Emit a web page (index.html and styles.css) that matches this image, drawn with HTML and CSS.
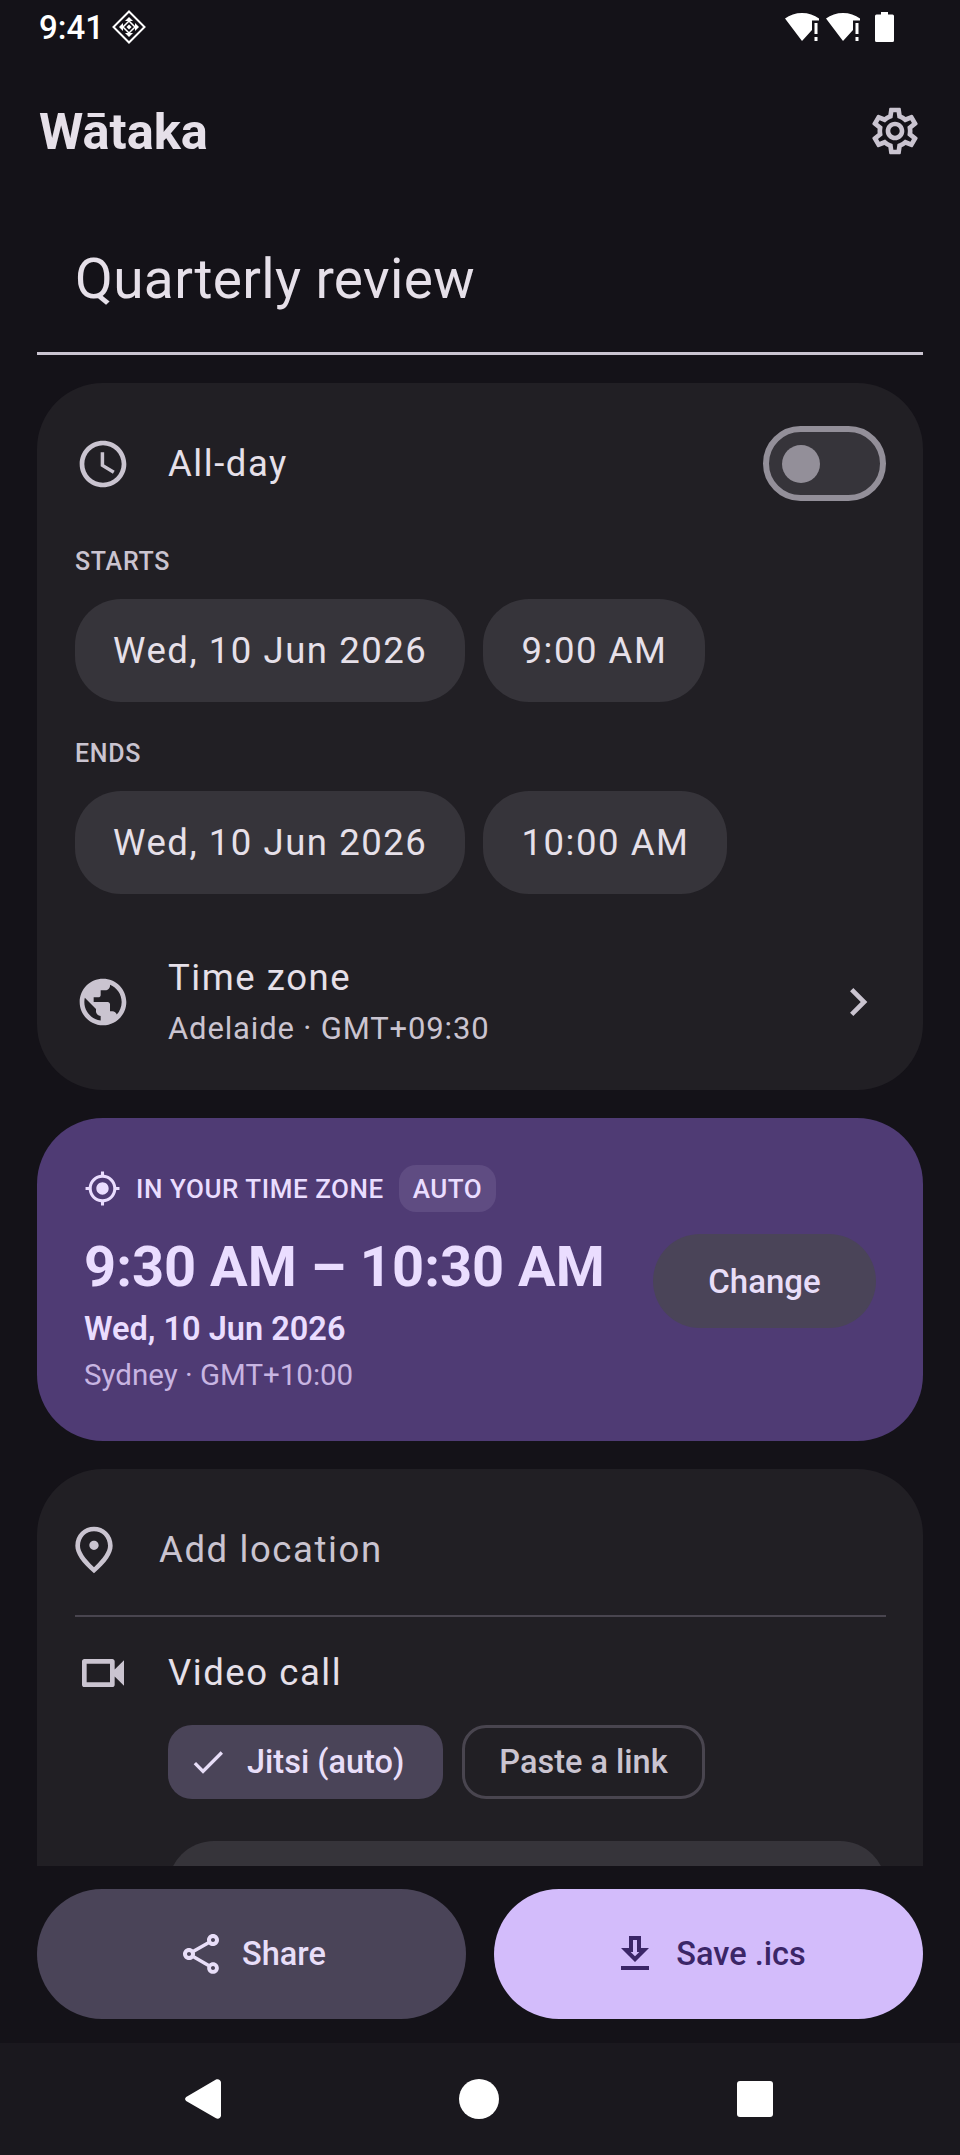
FILE: index.html
```html
<!DOCTYPE html>
<html>
  <head>
    <meta charset="utf-8">
    <title>Wātaka</title>
    <link rel="stylesheet" href="styles.css">
  </head>
  <body>
    <div class="screen">
      <div class="status">
        <span class="clock">9:41</span>
        <svg class="sim" viewBox="0 0 34 34">
          <path d="M17 1.5L32.5 17 17 32.500 1.500 17z" fill="none" stroke="#fff" stroke-width="2"/>
          <path d="M17 7l4 4h-8zM27 17l-4 4v-8zM17 27l-4-4h8zM7 17l4-4v8z" fill="#fff"/>
          <path d="M17 11l6 6-6 6-6-6z" fill="none" stroke="#fff" stroke-width="1.500"/>
          <path d="M17 14.500l2.500 2.500-2.500 2.500-2.500-2.500z" fill="#fff"/>
        </svg>
        <span class="status-gap"></span>
        <svg class="wifi" viewBox="0 0 34 30">
          <path d="M0 6.500C9 -1 25 -1 34 6.500V8.500H27V18L17 29z" fill="#fff"/>
          <path d="M29.500 11h3v11h-3zM29.500 25h3v4h-3z" fill="#fff"/>
        </svg>
        <svg class="wifi" viewBox="0 0 34 30">
          <path d="M0 6.500C9 -1 25 -1 34 6.500V8.500H27V18L17 29z" fill="#fff"/>
          <path d="M29.500 11h3v11h-3zM29.500 25h3v4h-3z" fill="#fff"/>
        </svg>
        <svg class="battery" viewBox="0 0 19 30">
          <path d="M6 0h7v2.500h4.500a1.500 1.500 0 0 1 1.500 1.500v24.500a1.500 1.500 0 0 1-1.500 1.500h-16a1.500 1.500 0 0 1-1.500-1.500v-24.500a1.500 1.500 0 0 1 1.500-1.500h4.500z" fill="#fff"/>
        </svg>
      </div>

      <div class="appbar">
        <span class="brand">Wātaka</span>
        <svg class="icon" viewBox="0 0 24 24"><path d="M19.430 12.980c.04-.32.07-.64.07-.98 0-.34-.03-.66-.07-.98l2.110-1.650c.19-.15.24-.42.12-.64l-2-3.460c-.09-.16-.26-.25-.44-.25-.06 0-.12.01-.17.03l-2.490 1c-.52-.4-1.080-.73-1.690-.98l-.38-2.650C14.460 2.180 14.250 2 14 2h-4c-.25 0-.46.18-.49.42l-.38 2.650c-.61.25-1.170.59-1.690.98l-2.490-1c-.06-.02-.12-.03-.18-.03-.17 0-.34.09-.43.25l-2 3.460c-.13.22-.07.49.12.64l2.110 1.650c-.04.32-.07.65-.07.98 0 .33.03.66.07.98l-2.110 1.650c-.19.15-.24.42-.12.64l2 3.460c.09.16.26.25.44.25.06 0 .12-.01.17-.03l2.490-1c.52.4 1.080.73 1.690.98l.38 2.650c.03.24.24.42.49.42h4c.25 0 .46-.18.49-.42l.38-2.650c.61-.25 1.170-.59 1.690-.98l2.490 1c.06.02.12.03.18.03.17 0 .34-.09.43-.25l2-3.460c.12-.22.07-.49-.12-.64l-2.110-1.650zm-1.980-1.710c.04.31.05.52.05.73 0 .21-.02.43-.05.73l-.14 1.130.89.7 1.080.84-.7 1.210-1.270-.51-1.040-.42-.9.68c-.43.32-.84.56-1.250.73l-1.060.43-.16 1.130-.2 1.350h-1.400l-.19-1.350-.16-1.130-1.060-.43c-.43-.18-.83-.41-1.230-.71l-.91-.7-1.060.43-1.270.51-.7-1.210 1.080-.84.89-.7-.14-1.130c-.03-.31-.05-.54-.05-.74s.02-.43.05-.73l.14-1.130-.89-.7-1.080-.84.7-1.210 1.270.51 1.040.42.9-.68c.43-.32.84-.56 1.250-.73l1.060-.43.16-1.130.2-1.350h1.390l.19 1.350.16 1.130 1.060.43c.43.18.83.41 1.230.71l.91.7 1.060-.43 1.270-.51.7 1.210-1.070.85-.89.7.14 1.130zM12 8c-2.210 0-4 1.790-4 4s1.790 4 4 4 4-1.790 4-4-1.790-4-4-4zm0 6c-1.100 0-2-.9-2-2s.9-2 2-2 2 .9 2 2-.9 2-2 2z"/></svg>
      </div>

      <div class="title-field">Quarterly review</div>

      <div class="scroll">
        <div class="card when">
          <div class="row allday">
            <svg class="icon" viewBox="0 0 24 24"><path d="M11.990 2C6.470 2 2 6.480 2 12s4.470 10 9.990 10C17.520 22 22 17.520 22 12S17.520 2 11.990 2zM12 20c-4.420 0-8-3.580-8-8s3.580-8 8-8 8 3.580 8 8-3.580 8-8 8zm.5-13H11v6l5.250 3.150.75-1.230-4.500-2.670z"/></svg>
            <span class="row-text grow">All-day</span>
            <span class="toggle"><span class="thumb"></span></span>
          </div>

          <div class="label starts">STARTS</div>
          <div class="pills">
            <span class="pill">Wed, 10 Jun 2026</span>
            <span class="pill">9:00 AM</span>
          </div>

          <div class="label ends">ENDS</div>
          <div class="pills">
            <span class="pill">Wed, 10 Jun 2026</span>
            <span class="pill">10:00 AM</span>
          </div>

          <div class="row zone">
            <svg class="icon" viewBox="0 0 24 24"><path d="M12 2C6.480 2 2 6.480 2 12s4.480 10 10 10 10-4.480 10-10S17.520 2 12 2zm-1 17.930c-3.950-.49-7-3.850-7-7.930 0-.62.08-1.210.21-1.790L9 15v1c0 1.100.9 2 2 2v1.930zm6.900-2.540c-.26-.81-1-1.390-1.900-1.390h-1v-3c0-.55-.45-1-1-1H8v-2h2c.55 0 1-.45 1-1V7h2c1.100 0 2-.9 2-2v-.41c2.930 1.190 5 4.060 5 7.410 0 2.080-.8 3.970-2.100 5.390z"/></svg>
            <div class="stack grow">
              <span class="row-text">Time zone</span>
              <span class="row-sub">Adelaide · GMT+09:30</span>
            </div>
            <svg class="icon" viewBox="0 0 24 24"><path d="M10 6L8.590 7.410 13.170 12l-4.580 4.590L10 18l6-6z"/></svg>
          </div>
        </div>

        <div class="hero">
          <div class="hero-main">
            <div class="hero-head">
              <svg class="icon-gps" viewBox="0 0 24 24"><path d="M12 8c-2.210 0-4 1.790-4 4s1.790 4 4 4 4-1.790 4-4-1.790-4-4-4zm8.940 3c-.46-4.170-3.770-7.480-7.940-7.940V1h-2v2.060C6.830 3.520 3.520 6.830 3.060 11H1v2h2.060c.46 4.170 3.770 7.480 7.940 7.940V23h2v-2.060c4.170-.46 7.480-3.770 7.940-7.940H23v-2h-2.060zM12 19c-3.870 0-7-3.130-7-7s3.130-7 7-7 7 3.130 7 7-3.130 7-7 7z"/></svg>
              <span class="hero-label">IN YOUR TIME ZONE</span>
              <span class="badge">AUTO</span>
            </div>
            <div class="hero-time">9:30 AM – 10:30 AM</div>
            <div class="hero-date">Wed, 10 Jun 2026</div>
            <div class="hero-place">Sydney · GMT+10:00</div>
          </div>
          <span class="change">Change</span>
        </div>

        <div class="card extras">
          <div class="row location">
            <svg class="icon" viewBox="0 0 24 24"><path d="M12 12c-1.100 0-2-.9-2-2s.9-2 2-2 2 .9 2 2-.9 2-2 2zm6-1.800C18 6.570 15.350 4 12 4s-6 2.570-6 6.200c0 2.340 1.950 5.440 6 9.140 4.050-3.700 6-6.800 6-9.140zM12 2c4.200 0 8 3.220 8 8.200 0 3.320-2.670 7.250-8 11.800-5.330-4.550-8-8.480-8-11.800C4 5.220 7.800 2 12 2z"/></svg>
            <span class="row-text placeholder">Add location</span>
          </div>
          <div class="divider"></div>
          <div class="row video">
            <svg class="icon" viewBox="0 0 24 24"><path d="M15 8v8H5V8h10m1-2H4c-.55 0-1 .45-1 1v10c0 .55.45 1 1 1h12c.55 0 1-.45 1-1v-3.500l4 4v-11l-4 4V7c0-.55-.45-1-1-1z"/></svg>
            <span class="row-text">Video call</span>
          </div>
          <div class="chips">
            <span class="chip chip-on">
              <svg class="icon-check" viewBox="0 0 24 24"><path d="M9 16.170L4.830 12l-1.420 1.410L9 19 21 7l-1.410-1.410z"/></svg>
              Jitsi (auto)
            </span>
            <span class="chip chip-off">Paste a link</span>
          </div>
          <div class="link-field"></div>
        </div>
      </div>

      <div class="actions">
        <span class="action share">
          <svg class="icon-action" viewBox="0 0 24 24"><path d="M18 16.080c-.76 0-1.440.3-1.960.77L8.910 12.700c.05-.23.09-.46.09-.7s-.04-.47-.09-.7l7.050-4.110c.54.5 1.250.81 2.040.81 1.660 0 3-1.340 3-3s-1.340-3-3-3-3 1.340-3 3c0 .24.04.47.09.7L8.040 9.810C7.500 9.310 6.790 9 6 9c-1.660 0-3 1.340-3 3s1.340 3 3 3c.79 0 1.500-.31 2.040-.81l7.120 4.160c-.05.21-.08.43-.08.65 0 1.610 1.310 2.920 2.920 2.920s2.920-1.310 2.920-2.920-1.310-2.920-2.920-2.920zM18 4c.55 0 1 .45 1 1s-.45 1-1 1-1-.45-1-1 .45-1 1-1zM6 13c-.55 0-1-.45-1-1s.45-1 1-1 1 .45 1 1-.45 1-1 1zm12 7.020c-.55 0-1-.45-1-1s.45-1 1-1 1 .45 1 1-.45 1-1 1z"/></svg>
          Share
        </span>
        <span class="action save">
          <svg class="icon-action" viewBox="0 0 24 24"><path d="M19 9h-4V3H9v6H5l7 7 7-7zm-8 2V5h2v6h1.170L12 13.170 9.830 11H11zm-6 7h14v2H5z"/></svg>
          Save .ics
        </span>
      </div>

      <div class="nav">
        <svg class="nav-back" viewBox="0 0 36 40"><path d="M2 17.500L31 .6c2-1.100 5 .2 5 3v33c0 2.600-3 3.900-5 2.700L2 22.500c-2.500-1.500-2.500-3.500 0-5z" fill="#fff"/></svg>
        <span class="nav-home"></span>
        <span class="nav-recent"></span>
      </div>
    </div>
  </body>
</html>
```

FILE: styles.css
```css
body {
  margin: 0;
  background-color: #141218;
  font-family: Roboto, "Liberation Sans", sans-serif;
  color: #e6e0e9;
}

svg { display: block; flex: none; }

.screen {
  display: flex;
  flex-direction: column;
  width: 960px;
  height: 2155px;
  overflow: hidden;
}

/* status bar */
.status {
  display: flex;
  align-items: center;
  height: 54px;
  padding: 0 66px 0 39px;
  flex: none;
}
.clock { font-size: 33px; font-weight: 500; color: #fff; }
.sim { width: 34px; height: 34px; margin-left: 8px; }
.status-gap { flex: 1; }
.wifi { width: 34px; height: 30px; margin-right: 7px; }
.battery { width: 19px; height: 30px; margin-left: 8px; }

/* app bar */
.appbar {
  display: flex;
  align-items: center;
  justify-content: space-between;
  height: 154px;
  padding: 0 37px 0 39px;
  flex: none;
}
.brand { font-size: 50.6px; font-weight: 700; }
.icon { width: 56px; height: 56px; fill: #cac4d0; }

.title-field {
  flex: none;
  box-sizing: border-box;
  height: 147px;
  margin: 0 37px;
  padding: 39px 0 0 38px;
  font-size: 55px;
  line-height: 64px;
  letter-spacing: 0.35px;
  border-bottom: 3px solid #cac4d0;
}

/* scrolling part */
.scroll {
  flex: 1;
  min-height: 0;
  overflow: hidden;
  padding: 28px 37px 0;
}
.card {
  background-color: #211f24;
  border-radius: 66px;
  padding: 0 37px 0 38px;
}
.row { display: flex; align-items: center; gap: 37px; }
.grow { flex: 1; }
.row-text { font-size: 36.5px; line-height: 52px; letter-spacing: 1.55px; }
.row-sub { font-size: 31px; line-height: 44px; letter-spacing: 0.85px; color: #cac4d0; }
.stack { display: flex; flex-direction: column; gap: 3px; }

.when { height: 707px; box-sizing: border-box; padding-top: 43px; }
.allday { height: 75px; }
.toggle {
  display: flex;
  align-items: center;
  box-sizing: border-box;
  width: 123px;
  height: 75px;
  padding-left: 13px;
  background-color: #36343a;
  border: 6px solid #938f99;
  border-radius: 38px;
}
.thumb {
  width: 38px;
  height: 38px;
  background-color: #938f99;
  border-radius: 50%;
}

.label {
  font-size: 25px;
  font-weight: 500;
  line-height: 32px;
  letter-spacing: 0.7px;
  color: #cac4d0;
}
.starts { margin-top: 45px; }
.ends { margin-top: 36px; }
.pills { display: flex; gap: 18px; margin-top: 21px; }
.pill {
  display: flex;
  align-items: center;
  height: 103px;
  padding: 0 38px;
  font-size: 36.5px;
  letter-spacing: 1.55px;
  background-color: #36343a;
  border-radius: 46px;
}
.zone { margin-top: 58px; }

/* converted time */
.hero {
  display: flex;
  align-items: center;
  justify-content: space-between;
  height: 323px;
  box-sizing: border-box;
  margin-top: 28px;
  padding: 47px 47px 44px;
  background-color: #4f3b74;
  border-radius: 66px;
  color: #eaddff;
}
.hero-head { display: flex; align-items: center; height: 47px; }
.icon-gps { width: 37px; height: 37px; fill: #eaddff; margin-right: 15px; }
.hero-label { font-size: 26px; font-weight: 500; letter-spacing: 0.55px; }
.badge {
  display: flex;
  align-items: center;
  height: 47px;
  margin-left: 15px;
  padding: 0 14px;
  font-size: 26px;
  font-weight: 500;
  letter-spacing: 0.5px;
  background-color: #5f4c82;
  border-radius: 17px;
}
.hero-time {
  margin-top: 22px;
  font-size: 56px;
  font-weight: 700;
  line-height: 66px;
  white-space: nowrap;
}
.hero-date { margin-top: 7px; font-size: 32.5px; font-weight: 600; line-height: 44px; }
.hero-place { margin-top: 2px; font-size: 29.5px; line-height: 44px; color: #c8b5e2; }
.change {
  display: flex;
  align-items: center;
  justify-content: center;
  width: 223px;
  height: 94px;
  font-size: 33px;
  font-weight: 500;
  color: #e8def8;
  background-color: #4a4458;
  border-radius: 47px;
}

/* location and video */
.extras { margin-top: 28px; padding-top: 53px; height: 600px; box-sizing: border-box; }
.location { margin-left: -9px; height: 56px; }
.placeholder { color: #cac4d0; letter-spacing: 1.6px; }
.divider { height: 2px; margin-top: 37px; background-color: #49454f; }
.video { margin-top: 28px; height: 56px; }
.chips { display: flex; gap: 19px; margin: 24px 0 0 93px; }
.chip {
  display: flex;
  align-items: center;
  box-sizing: border-box;
  height: 74px;
  font-size: 32.5px;
  font-weight: 500;
  border-radius: 24px;
}
.chip-on { width: 275px; padding-left: 20px; gap: 19px; color: #e8def8; background-color: #4a4458; }
.chip-off {
  width: 243px;
  justify-content: center;
  color: #cac4d0;
  border: 3px solid #49454f;
}
.icon-check { width: 40px; height: 40px; fill: #e8def8; }
.link-field {
  height: 140px;
  margin: 42px 0 0 93px;
  background-color: #36343a;
  border-radius: 46px;
}

/* bottom actions */
.actions {
  display: flex;
  gap: 28px;
  flex: none;
  padding: 23px 37px 24px;
}
.action {
  display: flex;
  flex: 1;
  align-items: center;
  justify-content: center;
  gap: 17px;
  height: 130px;
  font-size: 32.5px;
  font-weight: 500;
  border-radius: 65px;
}
.icon-action { width: 48px; height: 48px; fill: currentColor; }
.share { color: #e8def8; background-color: #4a4458; }
.save { color: #3b2667; background-color: #d3bcfb; }

/* nav bar */
.nav {
  display: flex;
  align-items: center;
  justify-content: space-between;
  flex: none;
  height: 112px;
  padding: 0 187px 0 185px;
  background-color: #1a181e;
}
.nav-back { width: 36px; height: 40px; }
.nav-home { width: 40px; height: 40px; background-color: #fff; border-radius: 50%; }
.nav-recent { width: 36px; height: 36px; background-color: #fff; border-radius: 3px; }
```
